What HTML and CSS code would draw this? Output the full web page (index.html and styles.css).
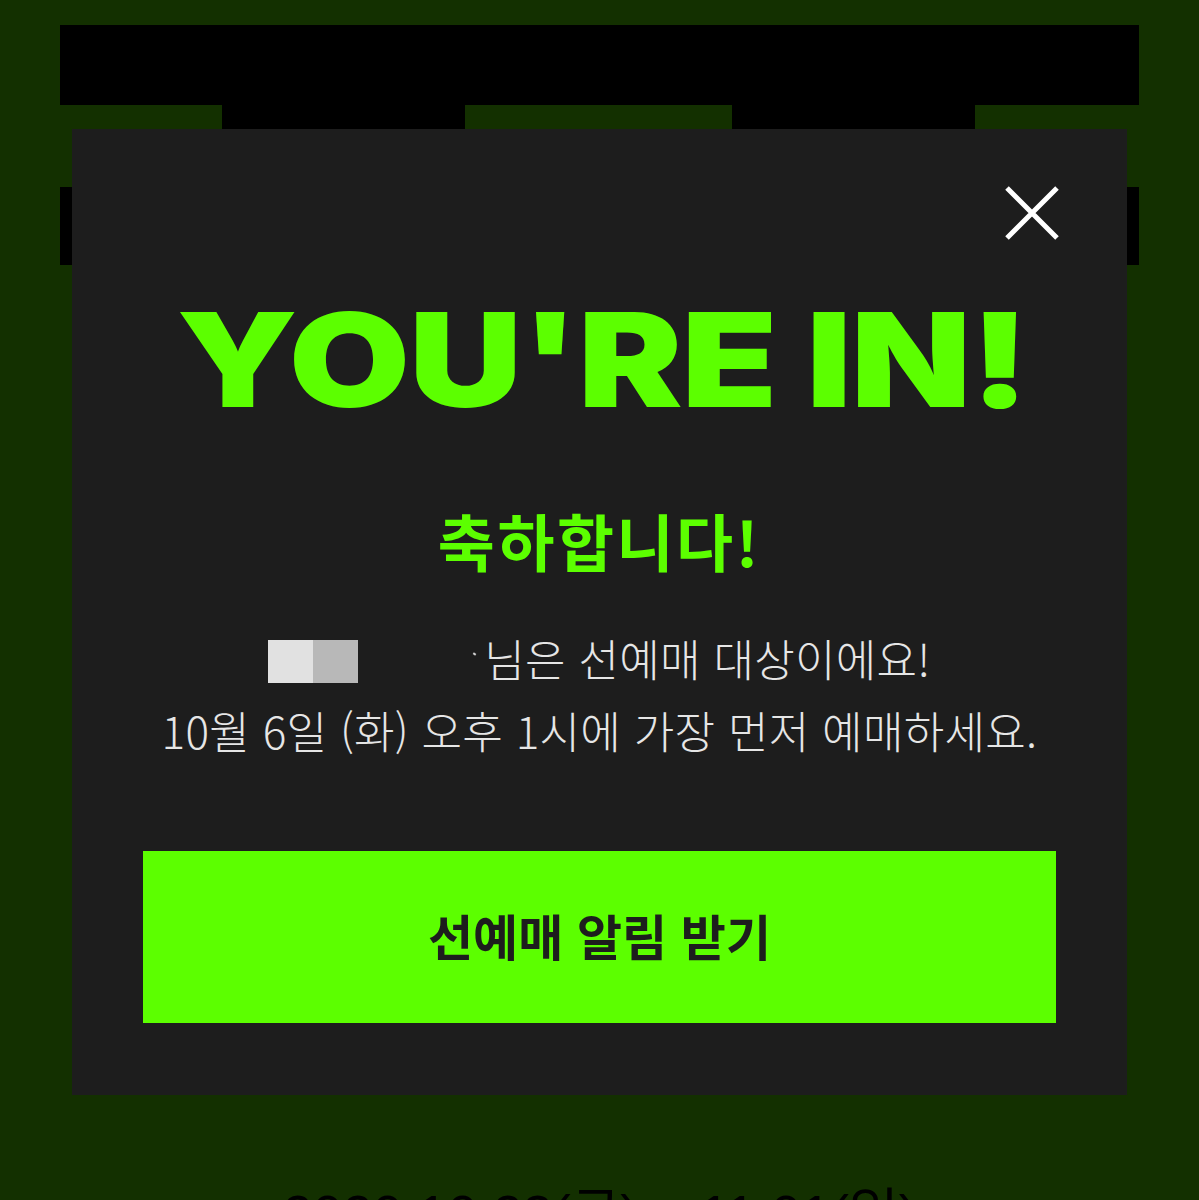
FILE: index.html
```html
<!DOCTYPE html>
<html lang="ko">
<head>
<meta charset="utf-8">
<title>YOU'RE IN!</title>
<link rel="stylesheet" href="styles.css">
</head>
<body>
<div class="page">
  <div class="topbar"></div>
  <div class="tabs">
    <div class="tab tab-gap-first"></div>
    <div class="tab tab-dark"></div>
    <div class="tab tab-gap"></div>
    <div class="tab tab-dark"></div>
  </div>
  <div class="subbar"></div>
  <div class="spacer"></div>
  <p class="period">2020.10.23(금) ~ 11.01(일)</p>
</div>

<div class="modal" role="dialog">
  <button class="close" aria-label="닫기">
    <svg width="56" height="56" viewBox="0 0 56 56" aria-hidden="true">
      <path d="M3 3 L53 53 M53 3 L3 53" stroke="#ffffff" stroke-width="5" stroke-linecap="butt" fill="none"/>
    </svg>
  </button>
  <h1 class="title">YOU'RE IN!</h1>
  <h2 class="congrats">축하합니다!</h2>
  <p class="message">
    <span class="line"><span class="name"><i class="n1"></i><i class="n2"></i></span><span class="blank"></span><span class="tick"></span>님은 선예매 대상이에요!</span>
    <span class="line">10월 6일 (화) 오후 1시에 가장 먼저 예매하세요.</span>
  </p>
  <button class="cta">선예매 알림 받기</button>
</div>
</body>
</html>
```

FILE: styles.css
```css
html, body {
  margin: 0;
  padding: 0;
}

body {
  background: #133000;
  height: 1200px;
  overflow: hidden;
  position: relative;
  font-family: "Noto Sans CJK KR", "Noto Sans", sans-serif;
}

.page {
  padding: 25px 60px 0;
}

.topbar {
  height: 80px;
  background: #000000;
}

.tabs {
  display: flex;
  height: 24px;
}

.tab-gap-first {
  width: 162px;
}

.tab-dark {
  width: 243px;
  background: #000000;
}

.tab-gap {
  width: 267px;
}

.subbar {
  margin-top: 58px;
  height: 78px;
  background: #000000;
}

.spacer {
  height: 922px;
}

.period {
  margin: 0;
  text-align: center;
  font-family: "Liberation Sans", "Noto Sans CJK KR", sans-serif;
  font-size: 54px;
  line-height: 1;
  color: #000000;
  white-space: nowrap;
}

.modal {
  position: absolute;
  top: 129px;
  left: 72px;
  width: 1055px;
  height: 966px;
  box-sizing: border-box;
  background: #1d1d1d;
  padding: 166px 71px 72px;
  display: flex;
  flex-direction: column;
  align-items: center;
}

.close {
  position: absolute;
  top: 56px;
  right: 67px;
  width: 56px;
  height: 56px;
  padding: 0;
  border: 0;
  background: transparent;
  display: block;
}

.close svg {
  display: block;
}

.title {
  margin: 0;
  font-family: "Inter", "Liberation Sans", sans-serif;
  font-weight: 900;
  font-size: 130px;
  line-height: 1;
  color: #5cff00;
  letter-spacing: -1px;
  transform: translateX(3px) scaleX(1.205);
  white-space: nowrap;
}

.congrats {
  margin: 84px 0 0;
  font-weight: 700;
  font-size: 62px;
  line-height: 1;
  color: #5cff00;
  letter-spacing: 2.5px;
}

.message {
  margin: 51px 0 0;
  font-weight: 300;
  font-size: 44px;
  line-height: 72px;
  color: #e6e6e6;
  text-align: center;
  letter-spacing: 0.3px;
}

.line {
  display: block;
  white-space: nowrap;
}

.name {
  display: inline-flex;
  width: 90px;
  height: 43px;
  vertical-align: -6px;
}

.name i {
  flex: 1;
  display: block;
}

.n1 {
  background: #e1e1e1;
}

.n2 {
  background: #b8b8b8;
}

.blank {
  display: inline-block;
  width: 115px;
}

.tick {
  display: inline-block;
  width: 3px;
  height: 2px;
  background: #d0d0d0;
  vertical-align: 22px;
  margin-right: 8px;
  transform: rotate(35deg);
}

.cta {
  margin-top: 85px;
  width: 913px;
  height: 172px;
  border: 0;
  background: #5cff00;
  color: #1d1d1d;
  font-family: "Noto Sans CJK KR", "Noto Sans", sans-serif;
  font-weight: 700;
  font-size: 49px;
  padding: 0 0 6px;
}
```
